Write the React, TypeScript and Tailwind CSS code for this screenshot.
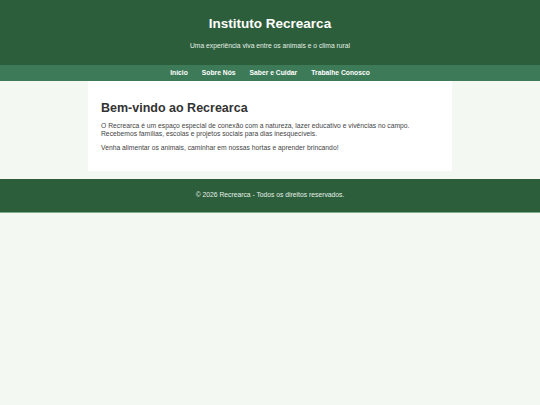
const navItems = ["Início", "Sobre Nós", "Saber e Cuidar", "Trabalhe Conosco"];

export default function App() {
  return (
    <div
      className="min-h-[405px] bg-[#f3f8f3] text-[#333]"
      style={{ fontFamily: "'Liberation Sans', Arial, sans-serif" }}
    >
      <header className="h-[65px] bg-[#2d5e3c] text-white flex flex-col items-center pt-[16px]">
        <h1 className="text-[13.5px] leading-[16px] font-bold">Instituto Recrearca</h1>
        <p className="mt-[9px] text-[6.75px] leading-[9px] text-[#e3efe6]">
          Uma experiência viva entre os animais e o clima rural
        </p>
      </header>

      <nav className="h-[16px] bg-[#3d7a57] flex items-center justify-center gap-[14px]">
        {navItems.map((item) => (
          <a key={item} href="#" className="text-[6.75px] font-bold text-white">
            {item}
          </a>
        ))}
      </nav>

      <main className="w-[364px] h-[90px] mx-auto bg-white px-[13px] pt-[20px]">
        <h2 className="text-[12.5px] leading-[15px] font-bold text-[#333]">Bem-vindo ao Recrearca</h2>
        <p className="mt-[6px] text-[6.75px] leading-[8px] text-[#444]">
          O Recrearca é um espaço especial de conexão com a natureza, lazer educativo e vivências no campo.
          Recebemos famílias, escolas e projetos sociais para dias inesquecíveis.
        </p>
        <p className="mt-[6px] text-[6.75px] leading-[8px] text-[#444]">
          Venha alimentar os animais, caminhar em nossas hortas e aprender brincando!
        </p>
      </main>

      <footer className="mt-[8px] h-[34px] bg-[#2d5e3c] border-b border-[#7fae8c] flex items-center justify-center">
        <p className="text-[6.75px] text-[#e3efe6]">© 2026 Recrearca - Todos os direitos reservados.</p>
      </footer>
    </div>
  );
}
